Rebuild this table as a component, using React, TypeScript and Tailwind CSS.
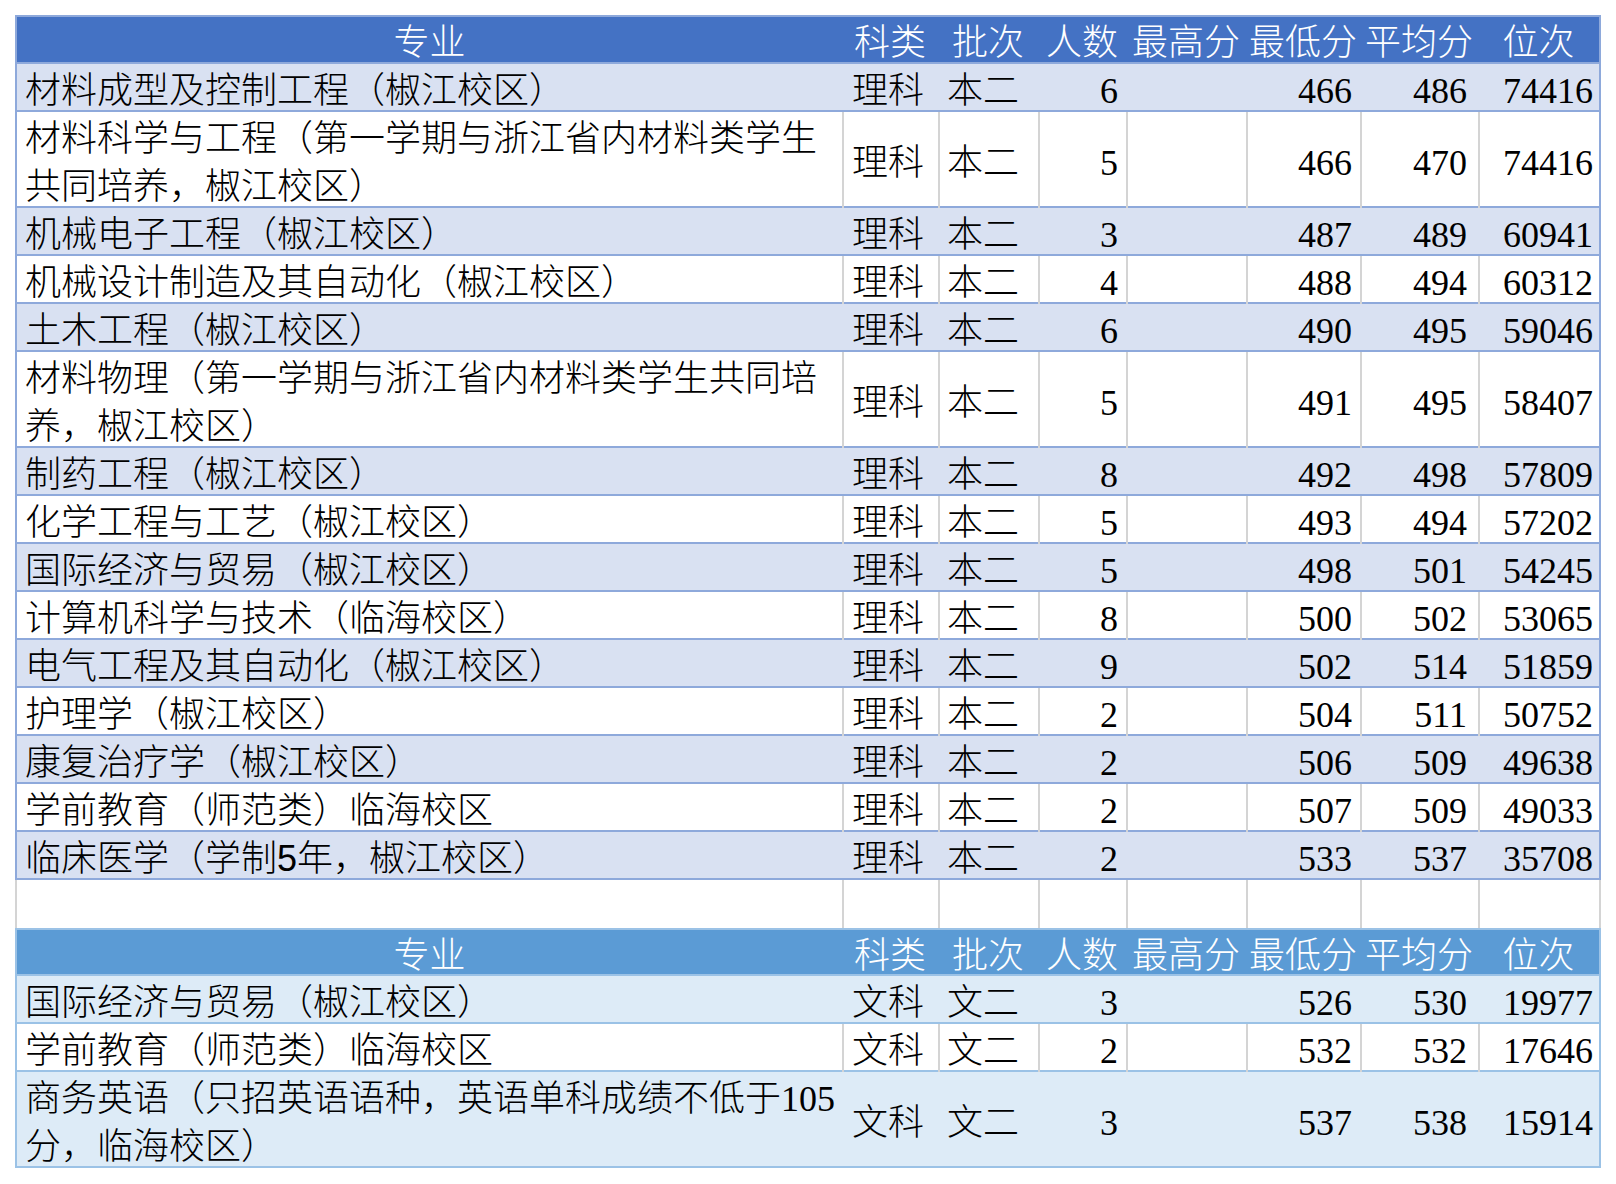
import React from "react";

type Kind = "head" | "band" | "white" | "blank";

const COLS = "grid grid-cols-[825px_96px_100px_88px_120px_114px_118px_121px]";

type RowData = {
  name: React.ReactNode;
  lines?: number;
  k: string;
  b: string;
  n: string;
  mx: string;
  mn: string;
  avg: string;
  rank: string;
};

const t1: RowData[] = [
  { name: "材料成型及控制工程（椒江校区）", k: "理科", b: "本二", n: "6", mx: "", mn: "466", avg: "486", rank: "74416" },
  {
    name: (
      <>
        材料科学与工程（第一学期与浙江省内材料类学生
        <br />
        共同培养，椒江校区）
      </>
    ),
    lines: 2,
    k: "理科",
    b: "本二",
    n: "5",
    mx: "",
    mn: "466",
    avg: "470",
    rank: "74416",
  },
  { name: "机械电子工程（椒江校区）", k: "理科", b: "本二", n: "3", mx: "", mn: "487", avg: "489", rank: "60941" },
  { name: "机械设计制造及其自动化（椒江校区）", k: "理科", b: "本二", n: "4", mx: "", mn: "488", avg: "494", rank: "60312" },
  { name: "土木工程（椒江校区）", k: "理科", b: "本二", n: "6", mx: "", mn: "490", avg: "495", rank: "59046" },
  {
    name: (
      <>
        材料物理（第一学期与浙江省内材料类学生共同培
        <br />
        养，椒江校区）
      </>
    ),
    lines: 2,
    k: "理科",
    b: "本二",
    n: "5",
    mx: "",
    mn: "491",
    avg: "495",
    rank: "58407",
  },
  { name: "制药工程（椒江校区）", k: "理科", b: "本二", n: "8", mx: "", mn: "492", avg: "498", rank: "57809" },
  { name: "化学工程与工艺（椒江校区）", k: "理科", b: "本二", n: "5", mx: "", mn: "493", avg: "494", rank: "57202" },
  { name: "国际经济与贸易（椒江校区）", k: "理科", b: "本二", n: "5", mx: "", mn: "498", avg: "501", rank: "54245" },
  { name: "计算机科学与技术（临海校区）", k: "理科", b: "本二", n: "8", mx: "", mn: "500", avg: "502", rank: "53065" },
  { name: "电气工程及其自动化（椒江校区）", k: "理科", b: "本二", n: "9", mx: "", mn: "502", avg: "514", rank: "51859" },
  { name: "护理学（椒江校区）", k: "理科", b: "本二", n: "2", mx: "", mn: "504", avg: "511", rank: "50752" },
  { name: "康复治疗学（椒江校区）", k: "理科", b: "本二", n: "2", mx: "", mn: "506", avg: "509", rank: "49638" },
  { name: "学前教育（师范类）临海校区", k: "理科", b: "本二", n: "2", mx: "", mn: "507", avg: "509", rank: "49033" },
  {
    name: (
      <>
        临床医学（学制<span className="font-['Liberation_Sans',sans-serif]">5</span>年，椒江校区）
      </>
    ),
    k: "理科",
    b: "本二",
    n: "2",
    mx: "",
    mn: "533",
    avg: "537",
    rank: "35708",
  },
];

const t2: RowData[] = [
  { name: "国际经济与贸易（椒江校区）", k: "文科", b: "文二", n: "3", mx: "", mn: "526", avg: "530", rank: "19977" },
  { name: "学前教育（师范类）临海校区", k: "文科", b: "文二", n: "2", mx: "", mn: "532", avg: "532", rank: "17646" },
  {
    name: (
      <>
        商务英语（只招英语语种，英语单科成绩不低于105
        <br />
        分，临海校区）
      </>
    ),
    lines: 2,
    k: "文科",
    b: "文二",
    n: "3",
    mx: "",
    mn: "537",
    avg: "538",
    rank: "15914",
  },
];

function Header({ theme }: { theme: 1 | 2 }) {
  const rowCls =
    theme === 1
      ? "h-[49px] border-t-2 border-b-2 border-x-2 border-[#8EA9DB] bg-[#4472C4]"
      : "h-[48px] border-t-2 border-b-2 border-x-2 border-[#9BC2E6] bg-[#5B9BD5]";
  const cell = "flex items-center justify-center pt-[2px] text-white whitespace-nowrap";
  return (
    <div className={`${COLS} box-border ${rowCls}`}>
      <div className={cell}>专业</div>
      <div className={cell}>科类</div>
      <div className={cell}>批次</div>
      <div className={cell}>人数</div>
      <div className={cell}>最高分</div>
      <div className={cell}>最低分</div>
      <div className={cell}>平均分</div>
      <div className={cell}>位次</div>
    </div>
  );
}

function Row({ d, kind, theme }: { d: RowData; kind: Kind; theme: 1 | 2 }) {
  const two = d.lines === 2;
  const h = two ? "h-[96px]" : "h-[48px]";
  let rowCls = "";
  if (theme === 1) {
    rowCls = kind === "band" ? "border-[#8EA9DB] bg-[#D9E1F2]" : "border-[#8EA9DB] bg-white";
  } else {
    rowCls = kind === "band" ? "border-[#9BC2E6] bg-[#DDEBF7]" : "border-[#9BC2E6] bg-white";
  }
  const vl = kind === "band" ? "border-l-2 border-transparent" : "border-l-2 border-[#D4D4D4]";
  const txt = "flex items-center pt-[2px] whitespace-nowrap";
  const num = `flex items-center justify-end pt-[2px] ${vl}`;
  return (
    <div className={`${COLS} box-border border-x-2 border-b-2 ${h} ${rowCls}`}>
      <div className={`flex items-center pl-2 pt-[3px] leading-[48px] whitespace-nowrap`}>
        <div>{d.name}</div>
      </div>
      <div className={`${txt} pl-[8px] ${vl}`}>{d.k}</div>
      <div className={`${txt} pl-[7px] ${vl}`}>{d.b}</div>
      <div className={`${num} pr-[8px]`}>{d.n}</div>
      <div className={`${num} pr-[8px]`}>{d.mx}</div>
      <div className={`${num} pr-[8px]`}>{d.mn}</div>
      <div className={`${num} pr-[11px]`}>{d.avg}</div>
      <div className={`${num} pr-[6px]`}>{d.rank}</div>
    </div>
  );
}

function Blank() {
  const c = "border-l-2 border-[#D4D4D4]";
  return (
    <div className={`${COLS} box-border h-[48px] border-x-2 border-[#D4D4D4] bg-white`}>
      <div />
      <div className={c} />
      <div className={c} />
      <div className={c} />
      <div className={c} />
      <div className={c} />
      <div className={c} />
      <div className={c} />
    </div>
  );
}

export default function App() {
  return (
    <div className="w-[1616px] h-[1184px] bg-white pt-[15px] text-[36px] leading-[48px] font-light text-black [text-spacing-trim:space-all] font-['Liberation_Serif','Noto_Sans_CJK_SC',serif]">
      <div className="ml-[15px] w-[1586px] flex flex-col">
        <Header theme={1} />
        {t1.map((d, i) => (
          <Row key={i} d={d} kind={i % 2 === 0 ? "band" : "white"} theme={1} />
        ))}
        <Blank />
        <Header theme={2} />
        {t2.map((d, i) => (
          <Row key={i} d={d} kind={i % 2 === 0 ? "band" : "white"} theme={2} />
        ))}
      </div>
    </div>
  );
}
